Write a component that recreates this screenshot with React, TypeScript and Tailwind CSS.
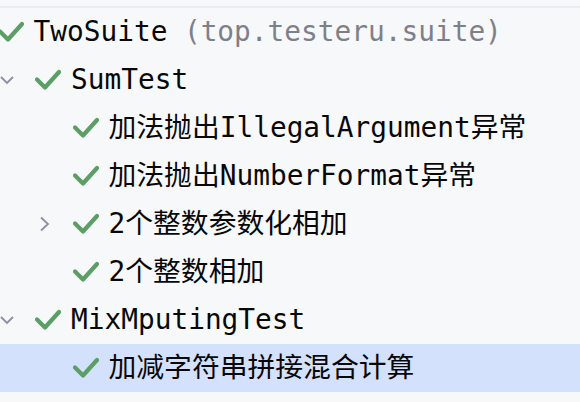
import React from "react";

interface TreeRow {
  level: number;
  name: string;
  hint?: string;
  chevron?: "down" | "right";
  selected?: boolean;
}

const rows: TreeRow[] = [
  { level: 0, name: "TwoSuite", hint: "(top.testeru.suite)" },
  { level: 1, name: "SumTest", chevron: "down" },
  { level: 2, name: "加法抛出IllegalArgument异常" },
  { level: 2, name: "加法抛出NumberFormat异常" },
  { level: 2, name: "2个整数参数化相加", chevron: "right" },
  { level: 2, name: "2个整数相加" },
  { level: 1, name: "MixMputingTest", chevron: "down" },
  { level: 2, name: "加减字符串拼接混合计算", selected: true },
];

const indent: Record<number, string> = {
  0: "ml-[-37.5px]",
  1: "ml-0",
  2: "ml-[37.5px]",
};

function Chevron({ dir }: { dir: "down" | "right" }) {
  if (dir === "down") {
    return (
      <svg width="14" height="10" viewBox="0 0 14 10">
        <path d="M1 2 L7 8 L13 2" fill="none" stroke="#8c8ea3" strokeWidth="1.8" />
      </svg>
    );
  }
  return (
    <svg width="11" height="16" viewBox="0 0 11 16" className="ml-[1px]">
      <path d="M2 1.5 L9 8 L2 14.5" fill="none" stroke="#8c8ea3" strokeWidth="1.8" />
    </svg>
  );
}

function Check() {
  return (
    <svg width="26" height="23" viewBox="0 0 26 23" className="shrink-0">
      <path
        d="M2 11.5 L10 19.5 L24 4"
        fill="none"
        stroke="#5b9f66"
        strokeWidth="4.2"
        strokeLinecap="round"
        strokeLinejoin="round"
      />
    </svg>
  );
}

export default function App() {
  return (
    <div
      className="w-[580px] h-[402px] overflow-hidden bg-[#f7f8fa] text-[27.8px] text-[#080808]"
      style={{ fontFamily: '"DejaVu Sans Mono", "Noto Sans CJK SC", monospace' }}
    >
      <div className="h-[6px]" />
      <div className="h-[2px] bg-[#ebecf0]" />
      <ul>
        {rows.map((row) => (
          <li
            key={row.name}
            className={
              "h-[48px] flex items-center whitespace-nowrap " +
              (row.selected ? "bg-[#d4e1fc]" : "")
            }
          >
            <div className={"flex items-center " + indent[row.level]}>
              <div className="w-[35px] flex items-center">
                {row.chevron && <Chevron dir={row.chevron} />}
              </div>
              <Check />
              <span className="ml-[10px] leading-none">{row.name}</span>
              {row.hint && (
                <span className="ml-[16.5px] leading-none text-[#7e8089]">{row.hint}</span>
              )}
            </div>
          </li>
        ))}
      </ul>
    </div>
  );
}
